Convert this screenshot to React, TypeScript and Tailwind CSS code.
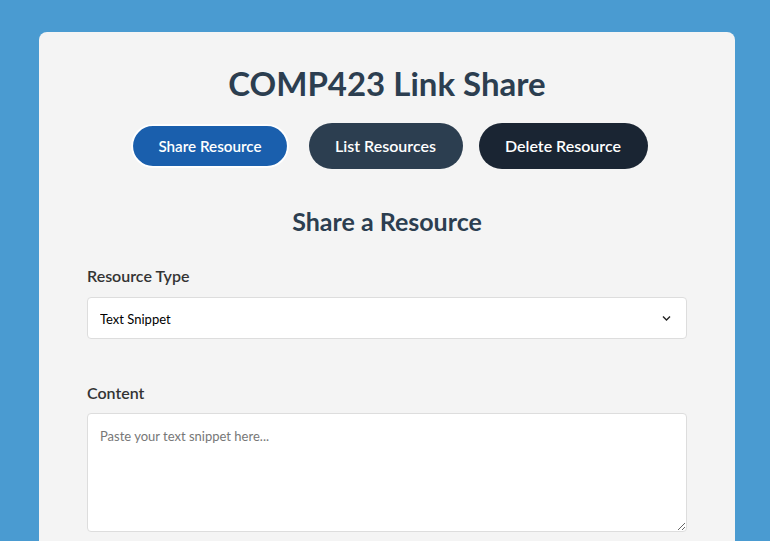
import React, { useState } from 'react'

const tabs = [
  { id: 'share', label: 'Share Resource', w: 'w-[166px]' },
  { id: 'list', label: 'List Resources', w: 'w-[154px]' },
  { id: 'delete', label: 'Delete Resource', w: 'w-[169px]' },
]

export default function App() {
  const [active, setActive] = useState('share')
  const [type, setType] = useState('text')
  const [content, setContent] = useState('')

  const tabClass = (id: string) => {
    if (id === 'share') {
      return active === id
        ? 'bg-[#1a5fad] border-2 border-white scale-95'
        : 'bg-[#1a5fad]'
    }
    if (id === 'list') return 'bg-[#2c3e50]'
    return 'bg-[#1a2533]'
  }

  return (
    <div className="min-h-screen bg-[#4a9bd1] pt-8 pl-[39px] pr-[35px] font-['Lato','Open_Sans',sans-serif]">
      <div className="rounded-lg bg-[#f4f4f4] px-12 pt-8 pb-10">
        <h1 className="text-center text-[33px] font-bold leading-[38px] text-[#2c3e50]">COMP423 Link Share</h1>

        <div className="mt-[21px] flex justify-center gap-4">
          {tabs.map((t) => (
            <button
              key={t.id}
              onClick={() => setActive(t.id)}
              className={`h-[46px] rounded-full text-[16px] font-semibold text-white ${t.w} ${tabClass(t.id)}`}
            >
              {t.label}
            </button>
          ))}
        </div>

        <h2 className="mt-[38px] text-center text-[25px] font-bold leading-[29px] text-[#2c3e50]">Share a Resource</h2>

        <div className="mt-[31px]">
          <label className="block text-[16px] font-semibold leading-[18px] text-[#333]">Resource Type</label>
          <div className="relative mt-3">
            <select
              value={type}
              onChange={(e) => setType(e.target.value)}
              className="h-[42px] w-full appearance-none rounded border border-[#ddd] bg-white px-3 pt-[3px] text-[13px] text-black outline-none"
            >
              <option value="text">Text Snippet</option>
              <option value="url">URL</option>
              <option value="vscode">VS Code Launch</option>
            </select>
            <svg className="pointer-events-none absolute right-[16px] top-[17px] h-[8px] w-[9px]" viewBox="0 0 9 8" fill="none">
              <path d="M1 2.5 L4.5 6 L8 2.5" stroke="#222" strokeWidth="1.4" />
            </svg>
          </div>
        </div>

        <div className="mt-[45px]">
          <label className="block text-[16px] font-semibold leading-[18px] text-[#333]">Content</label>
          <textarea
            value={content}
            onChange={(e) => setContent(e.target.value)}
            placeholder="Paste your text snippet here..."
            className="mt-[11px] block h-[119px] w-full rounded border border-[#ddd] bg-white px-3 py-[13px] text-[13px] text-black placeholder:text-[#777] outline-none"
          />
        </div>
      </div>
    </div>
  )
}
